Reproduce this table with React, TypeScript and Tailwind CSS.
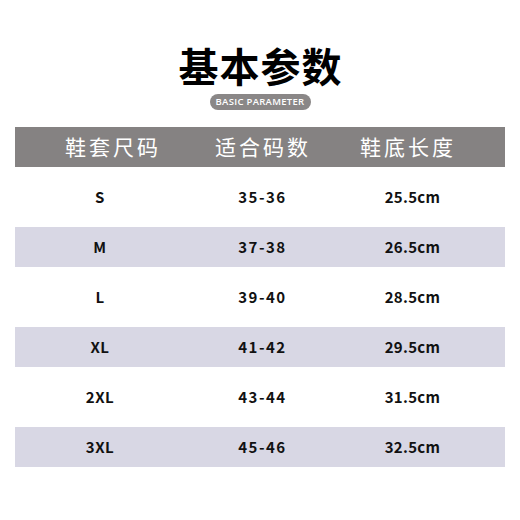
const rows = [
  { size: "S", fit: "35-36", len: "25.5cm" },
  { size: "M", fit: "37-38", len: "26.5cm" },
  { size: "L", fit: "39-40", len: "28.5cm" },
  { size: "XL", fit: "41-42", len: "29.5cm" },
  { size: "2XL", fit: "43-44", len: "31.5cm" },
  { size: "3XL", fit: "45-46", len: "32.5cm" },
];

export default function App() {
  return (
    <div className="w-[520px] h-[520px] bg-white font-['Noto_Sans_CJK_SC',sans-serif] overflow-hidden">
      {/* title */}
      <div className="flex flex-col items-center pt-[37px]">
        <h1 className="text-[40px] leading-[56px] font-bold text-black tracking-[1px] pl-[1px]">
          基本参数
        </h1>
        <div className="mt-[1px] h-[16px] w-[101px] rounded-full bg-[#8a8787] flex items-center justify-center text-[9.5px] font-semibold text-white tracking-[0.3px] font-['Open_Sans',sans-serif]">
          BASIC PARAMETER
        </div>
      </div>

      {/* table */}
      <div className="mx-[15px] mt-[17px]">
        <div className="h-[40px] bg-[#858282] flex items-center text-white text-[21px] tracking-[3px]">
          <span className="w-[50px]" />
          <span className="w-[150px]">鞋套尺码</span>
          <span className="w-[145px]">适合码数</span>
          <span>鞋底长度</span>
        </div>
        {rows.map((r, i) => (
          <div
            key={r.size}
            className={
              i % 2 === 1
                ? "h-[40px] bg-[#d8d7e4] grid grid-cols-[170px_155px_145px] items-center text-[15px] font-semibold text-[#111]"
                : "h-[60px] grid grid-cols-[170px_155px_145px] items-center text-[15px] font-semibold text-[#111]"
            }
          >
            <span className="text-center tracking-[0.5px]">{r.size}</span>
            <span className="text-center tracking-[1.5px]">{r.fit}</span>
            <span className="text-center tracking-[0.3px]">{r.len}</span>
          </div>
        ))}
      </div>
    </div>
  );
}
